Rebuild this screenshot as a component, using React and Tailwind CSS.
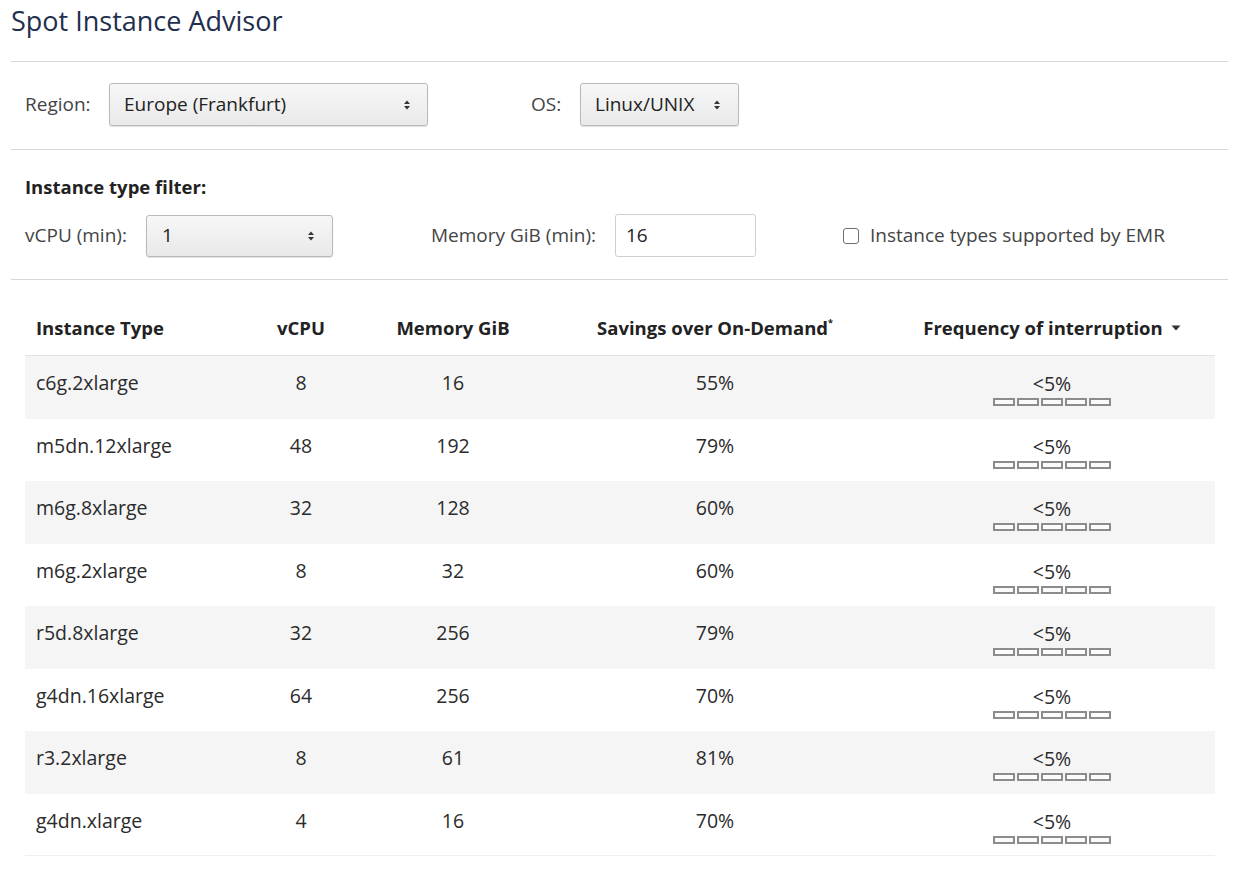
import React from "react";

const rows = [
  ["c6g.2xlarge", "8", "16", "55%"],
  ["m5dn.12xlarge", "48", "192", "79%"],
  ["m6g.8xlarge", "32", "128", "60%"],
  ["m6g.2xlarge", "8", "32", "60%"],
  ["r5d.8xlarge", "32", "256", "79%"],
  ["g4dn.16xlarge", "64", "256", "70%"],
  ["r3.2xlarge", "8", "61", "81%"],
  ["g4dn.xlarge", "4", "16", "70%"],
];

function Caret() {
  return (
    <svg width="8" height="12" viewBox="0 0 8 12" className="shrink-0">
      <path d="M4 1.5 L7 5 H1 Z" fill="#333" />
      <path d="M4 10.5 L7 7 H1 Z" fill="#333" />
    </svg>
  );
}

function Select({ value, className }) {
  return (
    <div
      className={`flex items-center justify-between rounded-[3px] border border-[#b9b9b9] bg-gradient-to-b from-[#f7f7f7] to-[#e9e9e9] shadow-[0_1px_1px_rgba(0,0,0,0.12)] ${className}`}
    >
      <span className="text-[19px] text-[#222]">{value}</span>
      <Caret />
    </div>
  );
}

function Bars() {
  return (
    <div className="flex gap-[2px] justify-center">
      {[0, 1, 2, 3, 4].map((i) => (
        <div key={i} className="w-[22px] h-[8px] border-2 border-[#8c8c8c] bg-[#fbfbfb]" />
      ))}
    </div>
  );
}

export default function App() {
  return (
    <div className="w-[1234px] h-[874px] bg-white font-['Open_Sans',sans-serif] text-[#2b2b2b]">
      <div className="pl-[11px] pr-[6px]">
        <div className="h-[61px] pt-[3px]">
          <h1 className="text-[27px] leading-[36px] text-[#1f2f4d]">Spot Instance Advisor</h1>
        </div>
        <div className="h-px bg-[#d8d8d8]" />
        <div className="flex items-center pl-[14px] pt-[21px] pb-[23px]">
          <span className="w-[84px] text-[19px] text-[#444]">Region:</span>
          <Select value="Europe (Frankfurt)" className="w-[319px] h-[43px] pl-[14px] pr-[16px]" />
          <span className="ml-[103px] w-[49px] text-[19px] text-[#444]">OS:</span>
          <Select value="Linux/UNIX" className="w-[159px] h-[43px] pl-[14px] pr-[17px]" />
        </div>
        <div className="h-px bg-[#d8d8d8]" />
        <div className="pl-[14px] pt-[25px] pb-[22px]">
          <div className="text-[18.5px] leading-[24px] font-bold text-[#222]">Instance type filter:</div>
          <div className="flex items-center mt-[15px]">
            <span className="w-[121px] text-[19px] text-[#444]">vCPU (min):</span>
            <Select value="1" className="w-[187px] h-[42px] pl-[15px] pr-[17px]" />
            <span className="ml-[98px] w-[184px] text-[19px] text-[#444]">Memory GiB (min):</span>
            <div className="w-[141px] h-[43px] flex items-center pl-[10px] rounded-[3px] border border-[#cfcfcf] bg-white">
              <span className="text-[19px] text-[#222]">16</span>
            </div>
            <div className="ml-[87px] w-[16px] h-[16px] rounded-[3px] border-[1.5px] border-[#707070] bg-white" />
            <span className="ml-[11px] text-[19px] text-[#444]">Instance types supported by EMR</span>
          </div>
        </div>
        <div className="h-px bg-[#d8d8d8]" />
      </div>

      <div className="ml-[25px] w-[1190px] mt-[21px]">
        <div className="flex items-center h-[55px] border-b border-[#e3e3e3] text-[18.5px] font-bold text-[#222]">
          <div className="w-[225px] pl-[11px]">Instance Type</div>
          <div className="w-[102px] text-center">vCPU</div>
          <div className="w-[202px] text-center">Memory GiB</div>
          <div className="w-[322px] text-center">
            Savings over On-Demand<sup className="text-[9px] align-super relative top-[-2px]">*</sup>
          </div>
          <div className="w-[339px] pl-[13px] flex items-center justify-center gap-[8px]">
            <span>Frequency of interruption</span>
            <svg width="10" height="6" viewBox="0 0 10 6">
              <path d="M0.5 0.5 H9.5 L5 5.5 Z" fill="#333" />
            </svg>
          </div>
        </div>
        {rows.map((r, i) => (
          <div
            key={r[0]}
            className={`flex h-[62.5px] text-[19.5px] text-[#2b2b2b] ${i % 2 === 0 ? "bg-[#f5f5f5]" : "bg-white"} ${i === rows.length - 1 ? "border-b border-[#eeeeee]" : ""}`}
          >
            <div className="w-[225px] pl-[11px] pt-[14px] leading-[26px]">{r[0]}</div>
            <div className="w-[102px] text-center pt-[14px] leading-[26px]">{r[1]}</div>
            <div className="w-[202px] text-center pt-[14px] leading-[26px]">{r[2]}</div>
            <div className="w-[322px] text-center pt-[14px] leading-[26px]">{r[3]}</div>
            <div className="w-[339px] pl-[13px] pt-[15px]">
              <div className="text-center leading-[26px] text-[19.5px]">&lt;5%</div>
              <div className="mt-[1px]">
                <Bars />
              </div>
            </div>
          </div>
        ))}
      </div>
    </div>
  );
}
